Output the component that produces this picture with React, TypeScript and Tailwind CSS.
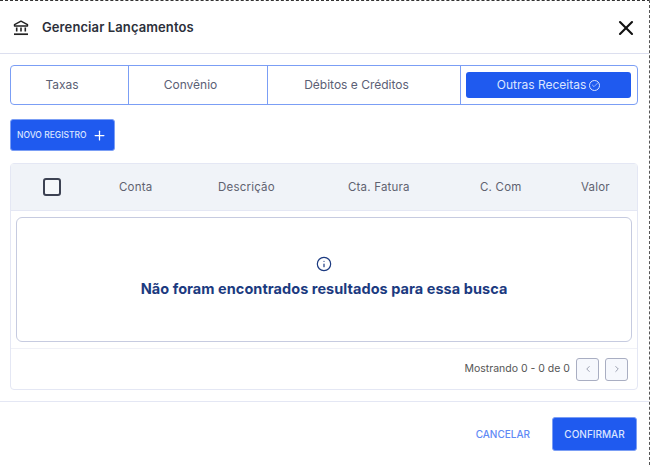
import { Check, ChevronLeft, ChevronRight, Info, Plus, X } from "lucide-react";

const tabs = [
  { label: "Taxas", width: "w-[118px]" },
  { label: "Convênio", width: "w-[139px]" },
  { label: "Débitos e Créditos", width: "w-[193px]" },
];

const columns = [
  { label: "Conta", width: "w-[99px]" },
  { label: "Descrição", width: "w-[130px]" },
  { label: "Cta. Fatura", width: "w-[132px]" },
  { label: "C. Com", width: "w-[101px]" },
  { label: "Valor", width: "w-[50px]" },
];

function BankIcon() {
  return (
    <svg width="16" height="16" viewBox="0 0 16 16" fill="none" stroke="#222" aria-hidden>
      <path d="M8 1.2 14.5 4.6V6H1.5V4.6Z" strokeWidth="1.4" strokeLinejoin="round" />
      <path d="M3.7 7.5V11.5M8 7.5V11.5M12.3 7.5V11.5" strokeWidth="1.6" />
      <path d="M1 14.2H15" strokeWidth="1.7" />
    </svg>
  );
}

export default function App() {
  return (
    <div className="h-[465px] w-[650px] overflow-hidden bg-white font-['Inter',sans-serif]">
      <div className="h-full w-[650px] border-t border-r border-dashed border-t-[#333] border-r-[#555]">
        <header className="flex h-[53px] items-center justify-between border-b border-[#dcdfef] pt-[1px] pr-[11px] pl-[13px]">
          <div className="flex items-center gap-[13px]">
            <BankIcon />
            <h1 className="text-[13px] font-semibold tracking-[0.1px] text-[#2c2f3a]">Gerenciar Lançamentos</h1>
          </div>
          <X size={24} strokeWidth={2.1} className="text-[#111]" />
        </header>

        <div className="mx-[10px] mt-[11px] flex h-[40px] w-[628px] rounded border border-[#7b9ef5]">
          {tabs.map((t) => (
            <div key={t.label} className={`flex items-center justify-center border-r border-[#7b9ef5] pr-[15px] text-[12px] text-[#5b6075] ${t.width}`}>
              {t.label}
            </div>
          ))}
          <div className="flex flex-1 py-[6px] pr-[6px] pl-[5px]">
            <div className="flex flex-1 items-center justify-center gap-[3px] rounded-[3px] bg-[#1f5aef] text-[12px] text-[#dbe5ff]">
              Outras Receitas
              <span className="flex size-[11px] items-center justify-center rounded-full border border-[#dbe5ff]">
                <Check size={8} strokeWidth={2} />
              </span>
            </div>
          </div>
        </div>

        <button className="mx-[10px] mt-[14px] flex h-[32px] w-[105px] items-center gap-[5px] rounded-[3px] border border-[#7b9ef5] bg-[#1f5aef] pl-[6px] text-[8.5px] font-medium text-[#dbe5ff]">
          NOVO REGISTRO
          <Plus size={15} strokeWidth={2} className="text-white" />
        </button>

        <section className="mx-[10px] mt-[12px] h-[227px] w-[628px] rounded border border-[#e4e7f4]">
          <div className="flex h-[47px] items-center border-b border-[#e4e7f4] bg-[#f0f3f8] pl-[32px]">
            <div className="mr-[58px] size-[18px] rounded-[3px] border-2 border-[#3d4253] bg-white/40" />
            {columns.map((c) => (
              <div key={c.label} className={`pt-[2px] text-[11.5px] tracking-[0.2px] text-[#5f6270] ${c.width}`}>
                {c.label}
              </div>
            ))}
          </div>

          <div className="mx-[5px] mt-[6px] flex h-[125px] flex-col items-center justify-center rounded-md border border-[#c6cbe0] pb-[4px]">
            <Info size={16} strokeWidth={1.8} className="text-[#1b3a80]" />
            <p className="mt-[6px] text-[14.5px] font-bold tracking-[0.05px] text-[#1b3a80]">Não foram encontrados resultados para essa busca</p>
          </div>

          <div className="mt-[6px] flex h-[41px] items-center justify-end gap-[6px] border-t border-[#f0f1f7] pr-[9px] text-[10.5px] text-[#555]">
            <span>Mostrando 0 - 0 de 0</span>
            <button className="flex size-[23px] items-center justify-center rounded-[3px] border border-[#a9aec2] bg-[#f6f8fd] text-[#7d8296]">
              <ChevronLeft size={10} strokeWidth={1.8} />
            </button>
            <button className="flex size-[23px] items-center justify-center rounded-[3px] border border-[#a9aec2] bg-[#f6f8fd] text-[#7d8296]">
              <ChevronRight size={10} strokeWidth={1.8} />
            </button>
          </div>
        </section>

        <footer className="mt-[11px] flex h-[63px] items-start justify-end gap-[22px] border-t border-[#e4e7f4] pt-[15px] pr-[12px]">
          <button className="mt-[10px] text-[10px] font-medium text-[#5f8af5]">CANCELAR</button>
          <button className="h-[34px] w-[85px] rounded-[3px] border border-[#7b9ef5] bg-[#1f5aef] text-[10px] font-medium text-[#dbe5ff]">
            CONFIRMAR
          </button>
        </footer>
      </div>
    </div>
  );
}
